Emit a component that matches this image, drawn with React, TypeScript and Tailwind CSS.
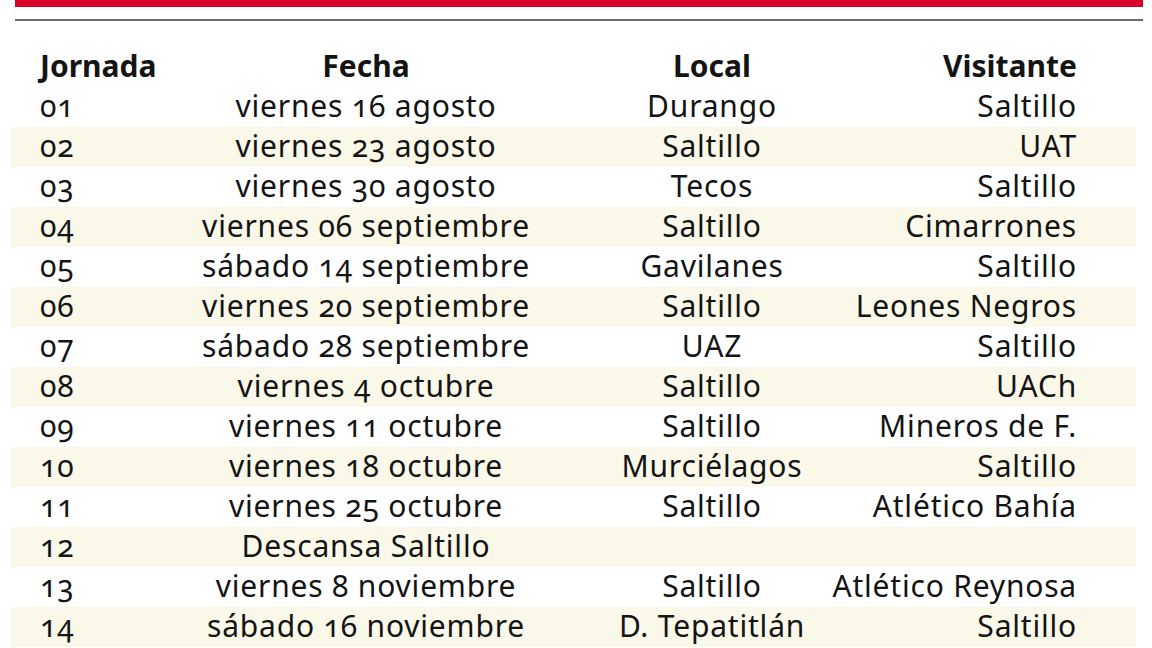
const rows: [string, string, string, string][] = [
  ['01', 'viernes 16 agosto', 'Durango', 'Saltillo'],
  ['02', 'viernes 23 agosto', 'Saltillo', 'UAT'],
  ['03', 'viernes 30 agosto', 'Tecos', 'Saltillo'],
  ['04', 'viernes 06 septiembre', 'Saltillo', 'Cimarrones'],
  ['05', 'sábado 14 septiembre', 'Gavilanes', 'Saltillo'],
  ['06', 'viernes 20 septiembre', 'Saltillo', 'Leones Negros'],
  ['07', 'sábado 28 septiembre', 'UAZ', 'Saltillo'],
  ['08', 'viernes 4 octubre', 'Saltillo', 'UACh'],
  ['09', 'viernes 11 octubre', 'Saltillo', 'Mineros de F.'],
  ['10', 'viernes 18 octubre', 'Murciélagos', 'Saltillo'],
  ['11', 'viernes 25 octubre', 'Saltillo', 'Atlético Bahía'],
  ['12', 'Descansa Saltillo', '', ''],
  ['13', 'viernes 8 noviembre', 'Saltillo', 'Atlético Reynosa'],
  ['14', 'sábado 16 noviembre', 'D. Tepatitlán', 'Saltillo'],
];

function Row({ cells, head, shaded }: { cells: [string, string, string, string]; head?: boolean; shaded?: boolean }) {
  return (
    <div
      className={`grid grid-cols-[126px_400px_292px_219px] pl-[29px] pr-[59px] h-[40px] leading-[37px] whitespace-nowrap ${
        shaded ? 'bg-[#faf8e9]' : ''
      } ${head ? 'font-bold' : 'font-normal tracking-[0.8px]'}`}
    >
      <div className="flex justify-start">{cells[0]}</div>
      <div className="flex justify-center">{cells[1]}</div>
      <div className="flex justify-center">{cells[2]}</div>
      <div className="flex justify-end">{cells[3]}</div>
    </div>
  );
}

export default function App() {
  return (
    <div
      className="w-[1152px] h-[648px] bg-white overflow-hidden text-[30px] text-[#141414] oldstyle-nums"
      style={{ fontFamily: '"Noto Sans", "Open Sans", sans-serif' }}
    >
      <div className="ml-[15px] w-[1128px] h-[7px] bg-[#d8002b]" />
      <div className="ml-[15px] mt-[12px] w-[1128px] h-[2px] bg-[#6a6a6a]" />
      <div className="ml-[11px] mt-[26px] w-[1125px]">
        <Row head cells={['Jornada', 'Fecha', 'Local', 'Visitante']} />
        {rows.map((r, i) => (
          <Row key={r[0]} cells={r} shaded={i % 2 === 1} />
        ))}
      </div>
    </div>
  );
}
